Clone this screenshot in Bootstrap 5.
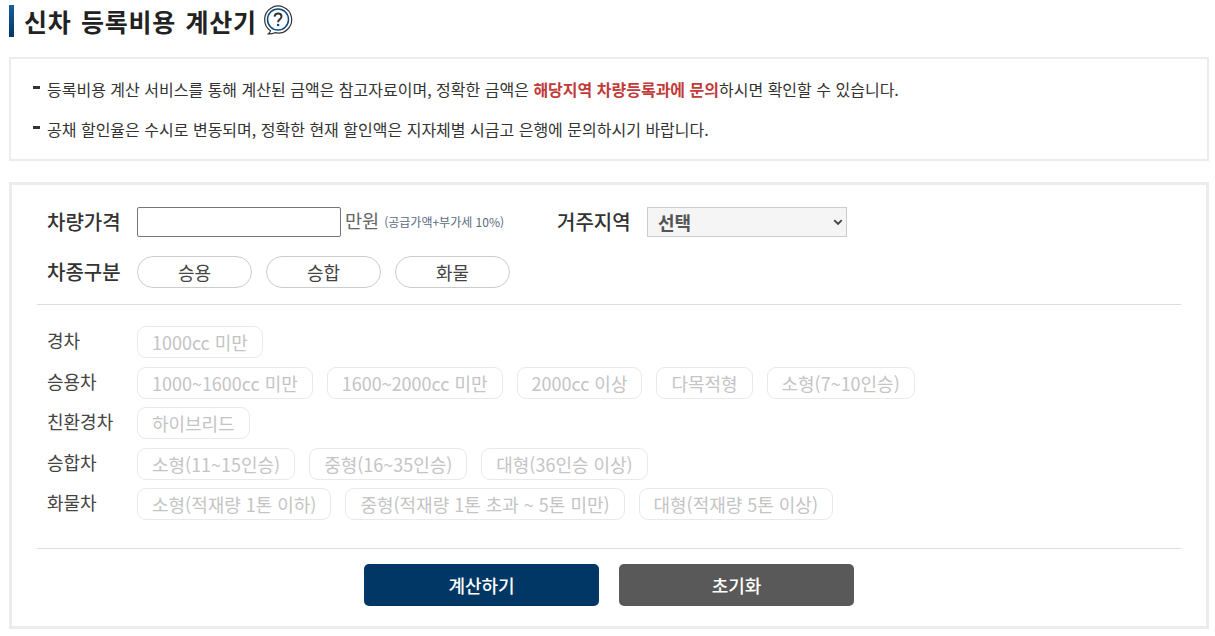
<!DOCTYPE html>
<html lang="ko"><head><meta charset="utf-8">
<link href="https://cdn.jsdelivr.net/npm/bootstrap@5.3.0/dist/css/bootstrap.min.css" rel="stylesheet">
<style>
html,body{height:636px;overflow:hidden}
body{font-family:"Noto Sans CJK KR","Noto Sans",sans-serif;color:#333;background:#fff;font-size:16px;padding:0 6px 0 9px}
.ttl{height:37px;padding-top:5px}
.ttl-bar{width:5px;height:32px;background:linear-gradient(#1a5f9e,#003764)}
.ttl h1{font-size:25px;font-weight:700;letter-spacing:.7px;margin:0 0 0 10px;color:#222;line-height:32px;word-spacing:2px}
.ttl svg{margin-left:6px;margin-top:-2px}
.notice{margin-top:20px;height:104px;border:2px solid #ececec;padding:0 22px}
.notice p{margin:0;height:41px;line-height:41px;font-size:16px;color:#333;display:flex;align-items:center;white-space:pre}
.notice p::before{content:"";width:7px;height:3px;background:#333;margin-right:7px;margin-top:-4px}
.notice b{color:#c23b3b;font-weight:700}
.notice-first{margin-top:10px!important;margin-bottom:-1px!important}
.calc{margin-top:21px;height:447px;border:3px solid #ececec;padding:0 25px}
.lab{font-size:20px;font-weight:500;color:#333;width:100px;padding-left:10px;line-height:26px;flex:none;white-space:nowrap}
.rowa{height:30px;margin-top:22px}
.rowb{height:32px;margin-top:19px}
.price{width:204px;height:30px;border:1px solid #767676;border-radius:2px;background:#fff;padding:0 4px;flex:none}
.won{font-size:18.600px;color:#666;margin-left:4px;line-height:26px;margin-top:-4px;white-space:nowrap}
.wonsub{font-size:12px;color:#596a80;margin-left:5px;white-space:nowrap}
.lab2{margin-left:53px;width:90px;padding-left:0}
.sel{width:200px;height:30px;background-color:#f5f5f5;background-image:url("data:image/svg+xml,%3csvg xmlns='http://www.w3.org/2000/svg' viewBox='0 0 16 16'%3e%3cpath fill='none' stroke='%23444' stroke-width='3' d='M2 5l6 6 6-6'/%3e%3c/svg%3e");background-position:right 3px center;background-size:10px 10px;border:1px solid #ccc;border-radius:0;font-size:18px;font-weight:700;color:#555;padding:0 10px;font-family:inherit;line-height:26px;flex:none}
.pill{width:115px;height:32px;border:1px solid #ccc;border-radius:16px;background:#fff;color:#444;font-size:18px;padding:0;line-height:30px;margin-right:14px}
.rule{border-top:1px solid #ddd;margin:16px 0 0;opacity:1}
.grid-list{margin-top:21px}
.kind{height:32px;margin-bottom:8.600px}
.kind-lab{font-size:18px;color:#444;width:100px;padding-left:10px;flex:none;line-height:28px}
.opt{height:32px;border:1px solid #e9e9e9;border-radius:9px;background:#fff;color:#c4c4c4;font-size:17.980px;padding:0 14px;line-height:30px;margin-right:14px;white-space:nowrap}
.rule2{border-top:1px solid #ddd;margin:27.800px 0 0;opacity:1}
.acts{margin-top:15px;gap:20px}
.act{width:235px;height:42px;border:0;border-radius:5px;color:#fff;font-size:18px;font-weight:500;line-height:42px;padding:0}
.act-go{background:#003764}.act-re{background:#595959}
</style></head><body>
<div class="ttl d-flex align-items-center">
<span class="ttl-bar"></span><h1>신차 등록비용 계산기</h1>
<svg width="30" height="30" viewBox="0 0 30 30" fill="none"><path d="M7.500 25.700A13.500 13.500 0 1 1 12 27.700C10 28.500 8 29 5.500 28.800C6.500 28 7.300 27 7.500 25.700Z" stroke="#333" stroke-width="1.200"/><circle cx="15" cy="14.500" r="10.500" stroke="#0b4a80" stroke-width="1.500"/><path d="M11.600 11.700c.2-2 1.600-3.100 3.500-3.100s3.400 1.200 3.400 2.900c0 2.800-3.400 2.700-3.400 5.700" stroke="#333" stroke-width="2"/><circle cx="15.100" cy="20" r="1.300" fill="#0b4a80"/></svg>
</div>
<div class="notice">
<p class="notice-first">등록비용 계산 서비스를 통해 계산된 금액은 참고자료이며, 정확한 금액은 <b>해당지역 차량등록과에 문의</b>하시면 확인할 수 있습니다.</p>
<p>공채 할인율은 수시로 변동되며, 정확한 현재 할인액은 지자체별 시금고 은행에 문의하시기 바랍니다.</p>
</div>
<form class="calc">
<div class="rowa d-flex align-items-center">
<label class="lab">차량가격</label><input class="price" type="text" aria-label="차량가격"><span class="won">만원</span><span class="wonsub">(공급가액+부가세 10%)</span>
<label class="lab lab2">거주지역</label><select class="form-select sel" aria-label="거주지역"><option>선택</option></select>
</div>
<div class="rowb d-flex align-items-center">
<span class="lab">차종구분</span><button type="button" class="btn pill">승용</button><button type="button" class="btn pill">승합</button><button type="button" class="btn pill">화물</button>
</div>
<hr class="rule">
<div class="grid-list">
<div class="kind d-flex"><span class="kind-lab">경차</span><span class="opt">1000cc 미만</span></div>
<div class="kind d-flex"><span class="kind-lab">승용차</span><span class="opt">1000~1600cc 미만</span><span class="opt">1600~2000cc 미만</span><span class="opt">2000cc 이상</span><span class="opt">다목적형</span><span class="opt">소형(7~10인승)</span></div>
<div class="kind d-flex"><span class="kind-lab">친환경차</span><span class="opt">하이브리드</span></div>
<div class="kind d-flex"><span class="kind-lab">승합차</span><span class="opt">소형(11~15인승)</span><span class="opt">중형(16~35인승)</span><span class="opt">대형(36인승 이상)</span></div>
<div class="kind d-flex"><span class="kind-lab">화물차</span><span class="opt">소형(적재량 1톤 이하)</span><span class="opt">중형(적재량 1톤 초과 ~ 5톤 미만)</span><span class="opt">대형(적재량 5톤 이상)</span></div>
</div>
<hr class="rule2">
<div class="acts d-flex justify-content-center"><button type="button" class="btn act act-go">계산하기</button><button type="button" class="btn act act-re">초기화</button></div>
</form>
<script src="https://cdn.jsdelivr.net/npm/bootstrap@5.3.0/dist/js/bootstrap.bundle.min.js"></script>
</body></html>
